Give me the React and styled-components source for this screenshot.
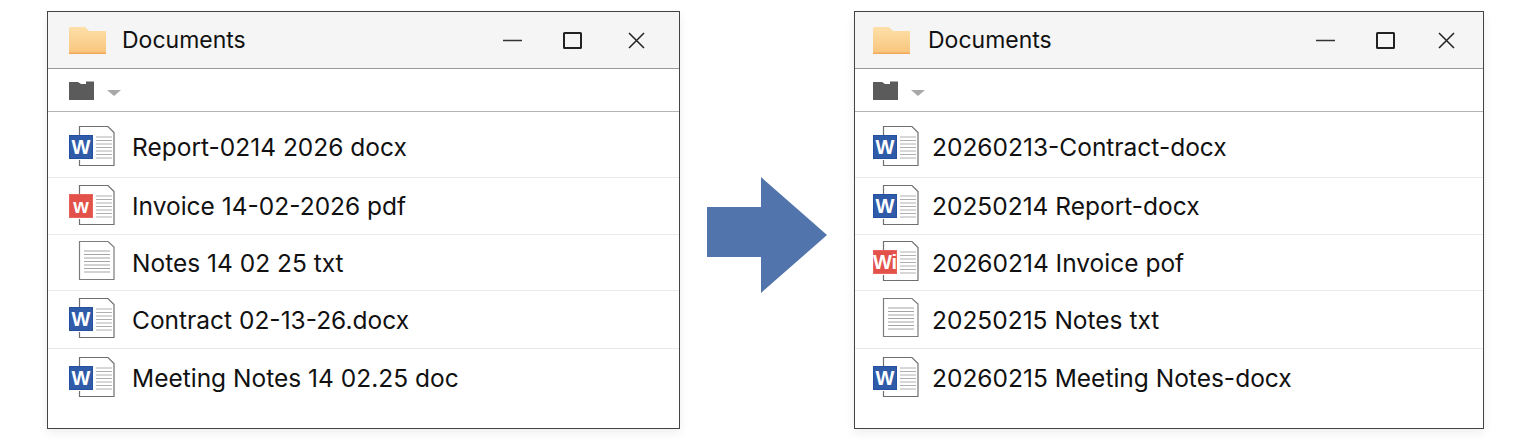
import styled, { createGlobalStyle } from "styled-components";

const windows = [
  {
    width: 633,
    pad: 21,
    textGap: 15,
    titleGap: 16,
    controls: { right: 33, first: 41, second: 45 },
    rows: [
      { name: "Report-0214 2026 docx", kind: "word", label: "W" },
      { name: "Invoice 14-02-2026 pdf", kind: "red", label: "w" },
      { name: "Notes 14 02 25 txt", kind: "text" },
      { name: "Contract 02-13-26.docx", kind: "word", label: "W" },
      { name: "Meeting Notes 14 02.25 doc", kind: "word", label: "W" },
    ],
  },
  {
    width: 630,
    pad: 18,
    textGap: 11,
    titleGap: 18,
    controls: { right: 27, first: 41, second: 42 },
    rows: [
      { name: "20260213-Contract-docx", kind: "word", label: "W" },
      { name: "20250214 Report-docx", kind: "word", label: "W" },
      { name: "20260214 Invoice pof", kind: "red", label: "Wi" },
      { name: "20250215 Notes txt", kind: "text" },
      { name: "20260215 Meeting Notes-docx", kind: "word", label: "W" },
    ],
  },
];

const rowHeights = [66, 57, 56, 58, 58];

const FileIcon = ({ kind, label }) => {
  if (kind === "text") {
    return (
      <IconSvg width="48" height="42" viewBox="0 0 48 42">
        <path d="M10.5 1.5H39L45 7V39.5H10.5Z" fill="#fff" stroke="#7c7c7c" strokeWidth="1.2" />
        <path
          d="M15 11H41M15 14.5H41M15 18H41M15 21.5H41M15 25H41M15 28.5H41M15 32H41"
          stroke="#a5a5a5"
          strokeWidth="1"
        />
      </IconSvg>
    );
  }
  const red = kind === "red";
  return (
    <IconSvg width="48" height="42" viewBox="0 0 48 42">
      <path d="M10.5 10V1.5H39L45 7.5V40.5H10.5V35" fill="#fff" stroke="#6f6f6f" strokeWidth="1.2" />
      <path
        d="M27 12H43M27 15.5H43M27 19H43M27 22.5H43M27 26H43M27 29.5H43M27 33H43"
        stroke="#b0b0b0"
        strokeWidth="1"
      />
      <rect x="0.5" y="10.5" width="23" height="23" fill={red ? "#e2524a" : "#2f5ba8"} stroke={red ? "#e8635c" : "#23509f"} />
      <BadgeText x="12" y="29" textAnchor="middle">
        {label}
      </BadgeText>
    </IconSvg>
  );
};

const FolderIcon = () => (
  <svg width="37" height="27" viewBox="0 0 37 27">
    <defs>
      <linearGradient id="folderFill" x1="0" y1="0" x2="0" y2="1">
        <stop offset="0" stopColor="#fde0a8" />
        <stop offset="1" stopColor="#f9c47c" />
      </linearGradient>
    </defs>
    <path d="M0 1.5Q0 0 1.5 0H16L20 4H37V27H0Z" fill="url(#folderFill)" />
    <rect y="25.5" width="37" height="1.5" fill="#f0a95a" />
  </svg>
);

const SmallFolder = () => (
  <svg width="25" height="19" viewBox="0 0 25 19">
    <path d="M0 1H9L12 3H17V0.5H25V19H0Z" fill="#5b5b5b" />
  </svg>
);

const ExplorerWindow = ({ data }) => (
  <Frame $width={data.width}>
    <TitleBar $pad={data.pad}>
      <FolderIcon />
      <Title $gap={data.titleGap}>Documents</Title>
      <Controls $right={data.controls.right}>
        <ControlSvg $after={data.controls.first} width="19" height="19" viewBox="0 0 19 19">
          <path d="M0 9.5H19" stroke="#333" strokeWidth="1.5" />
        </ControlSvg>
        <ControlSvg $after={data.controls.second} width="19" height="19" viewBox="0 0 19 19">
          <rect x="1" y="2" width="17" height="15" rx="0.5" fill="none" stroke="#222" strokeWidth="2" />
        </ControlSvg>
        <ControlSvg width="19" height="19" viewBox="0 0 19 19">
          <path d="M2 2L17 17M17 2L2 17" stroke="#222" strokeWidth="1.5" />
        </ControlSvg>
      </Controls>
    </TitleBar>
    <Toolbar $pad={data.pad}>
      <SmallFolder />
      <Caret />
    </Toolbar>
    <List>
      {data.rows.map((row, i) => (
        <Row key={row.name} $pad={data.pad} $height={rowHeights[i]} $first={i === 0} $last={i === 4}>
          <FileIcon kind={row.kind} label={row.label} />
          <FileName $gap={data.textGap}>{row.name}</FileName>
        </Row>
      ))}
    </List>
  </Frame>
);

export default function App() {
  return (
    <>
      <GlobalStyle />
      <Page>
        <ExplorerWindow data={windows[0]} />
        <Arrow width="120" height="116" viewBox="0 0 120 116">
          <path d="M0 30H54V0L120 58L54 116V80H0Z" fill="#5274ac" />
        </Arrow>
        <ExplorerWindow data={windows[1]} />
      </Page>
    </>
  );
}

const GlobalStyle = createGlobalStyle`
  html, body {
    margin: 0;
    background: #fff;
    overflow: hidden;
  }
`;

const Page = styled.div`
  display: flex;
  align-items: flex-start;
  gap: 27px;
  height: 442px;
  box-sizing: border-box;
  padding: 11px 0 0 47px;
  font-family: "Inter", "Noto Sans", sans-serif;
  color: #111;
`;

const Frame = styled.div`
  width: ${(props) => props.$width}px;
  height: 418px;
  box-sizing: border-box;
  flex-shrink: 0;
  display: flex;
  flex-direction: column;
  background: #fff;
  border: 1px solid #444;
  box-shadow: 0 4px 10px rgba(0, 0, 0, 0.07);
`;

const TitleBar = styled.div`
  display: flex;
  align-items: center;
  height: 57px;
  box-sizing: border-box;
  padding-left: ${(props) => props.$pad}px;
  background: #f4f5f4;
  border-bottom: 1px solid #9a9a9a;
`;

const Title = styled.span`
  margin-left: ${(props) => props.$gap}px;
  font-size: 23px;
`;

const Controls = styled.div`
  display: flex;
  margin-left: auto;
  margin-right: ${(props) => props.$right}px;
`;

const ControlSvg = styled.svg`
  margin-right: ${(props) => props.$after || 0}px;
`;

const Toolbar = styled.div`
  display: flex;
  align-items: center;
  height: 43px;
  box-sizing: border-box;
  padding-left: ${(props) => props.$pad}px;
  border-bottom: 1px solid #b4b4b4;
`;

const Caret = styled.span`
  width: 0;
  height: 0;
  margin: 5px 0 0 13px;
  border-left: 7px solid transparent;
  border-right: 7px solid transparent;
  border-top: 6px solid #a8a8a8;
`;

const List = styled.div`
  display: flex;
  flex-direction: column;
`;

const Row = styled.div`
  display: flex;
  align-items: center;
  height: ${(props) => props.$height}px;
  box-sizing: border-box;
  padding: ${(props) => (props.$first ? "5px" : "0")} 0 0 ${(props) => props.$pad}px;
  border-bottom: ${(props) => (props.$last ? "none" : "1px solid #e9e9e9")};
`;

const IconSvg = styled.svg`
  margin-top: -3px;
`;

const FileName = styled.span`
  margin-left: ${(props) => props.$gap}px;
  font-size: 24.5px;
`;

const BadgeText = styled.text`
  font-family: "Liberation Sans", sans-serif;
  font-size: 20px;
  font-weight: 700;
  fill: #fff;
`;

const Arrow = styled.svg`
  flex-shrink: 0;
  margin-top: 166px;
`;
